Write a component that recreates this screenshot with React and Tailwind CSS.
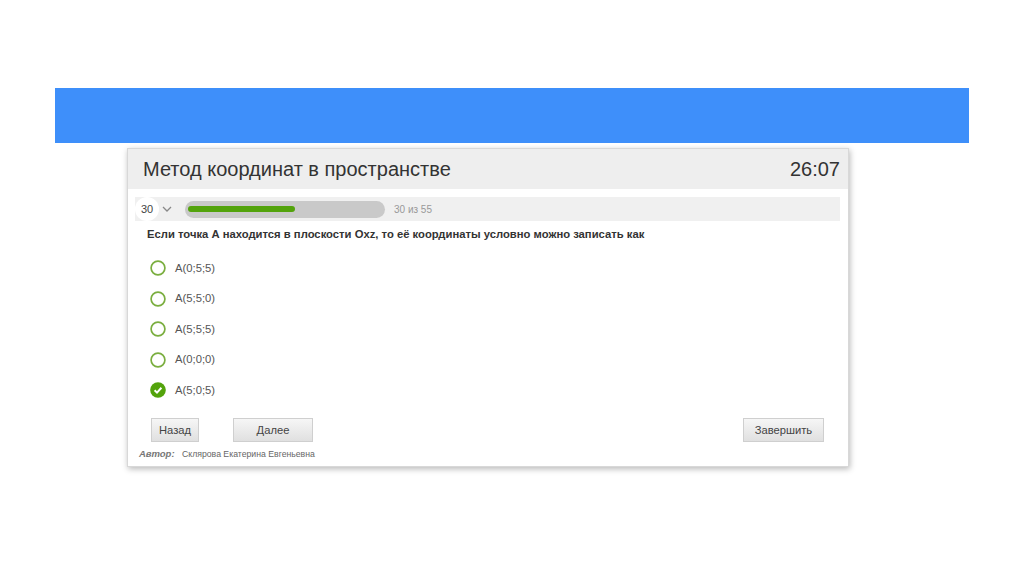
import React from "react";

const options = ["A(0;5;5)", "A(5;5;0)", "A(5;5;5)", "A(0;0;0)", "A(5;0;5)"];

function Btn({ w, children }) {
  return (
    <div className={`${w} h-[24px] flex items-center justify-center border border-[#cfcfcf] bg-gradient-to-b from-[#f6f6f6] to-[#e0e0e0] text-[11.2px] text-[#444]`}>
      {children}
    </div>
  );
}

function Radio({ checked }) {
  return (
    <svg width="16" height="16" viewBox="0 0 16 16">
      {checked ? (
        <>
          <circle cx="8" cy="8" r="7.8" fill="#53a30c" />
          <path d="M4.6 8.2 L7 10.6 L11.4 5.8" fill="none" stroke="#fff" strokeWidth="2" />
        </>
      ) : (
        <circle cx="8" cy="8" r="6.9" fill="#fff" stroke="#7aae3f" strokeWidth="1.7" />
      )}
    </svg>
  );
}

export default function App() {
  return (
    <div className="w-[1024px] h-[574px] bg-white pt-[88px] overflow-hidden font-['Liberation_Sans',Arial,sans-serif]">
      <div className="ml-[55px] w-[914px] h-[55px] bg-[#3e8ffa]" />
      <div className="ml-[127px] mt-[5px] w-[722px] h-[319px] bg-white border border-[#d8d8d8] shadow-[1px_2px_6px_rgba(0,0,0,0.28)] flex flex-col">
        <div className="h-[40px] shrink-0 bg-[#eeeeee] flex items-center justify-between pl-[15px] pr-[8px] text-[#333]">
          <span className="text-[20px] leading-none">Метод координат в пространстве</span>
          <span className="text-[20px] leading-none">26:07</span>
        </div>
        <div className="mt-[8px] ml-[7px] mr-[8px] h-[24px] shrink-0 bg-[#f0f0f0] flex items-center">
          <div className="w-[24px] h-[24px] bg-white rounded-full flex items-center justify-center">
            <span className="text-[11px] text-[#444]">30</span>
          </div>
          <svg className="ml-[3px]" width="10" height="6" viewBox="0 0 10 6">
            <path d="M1 1 L5 5 L9 1" fill="none" stroke="#888" strokeWidth="1.3" />
          </svg>
          <div className="ml-[13px] w-[200px] h-[17px] bg-[#c9c9c9] rounded-full flex items-center pl-[3px]">
            <div className="w-[107px] h-[6px] bg-[#53a30c] rounded-full" />
          </div>
          <span className="ml-[9px] text-[10px] text-[#999]">30 из 55</span>
        </div>
        <div className="mt-[6px] ml-[19px] text-[11.25px] leading-[14px] font-bold text-[#333]">
          Если точка А находится в плоскости Oxz, то её координаты условно можно записать как
        </div>
        <div className="mt-[19px] ml-[22px] flex flex-col gap-[14.5px]">
          {options.map((o, i) => (
            <div key={o} className="flex items-center gap-[9px] h-[16px]">
              <Radio checked={i === 4} />
              <span className="text-[11.25px] text-[#555]">{o}</span>
            </div>
          ))}
        </div>
        <div className="mt-[20px] ml-[23px] mr-[24px] flex items-center">
          <Btn w="w-[48px]">Назад</Btn>
          <div className="ml-[34px]"><Btn w="w-[80px]">Далее</Btn></div>
          <div className="ml-auto"><Btn w="w-[81px]">Завершить</Btn></div>
        </div>
        <div className="mt-[5px] ml-[11px] flex items-center">
          <span className="text-[9.5px] font-bold italic text-[#777] w-[43px]">Автор:</span>
          <span className="text-[8.7px] text-[#666]">Склярова Екатерина Евгеньевна</span>
        </div>
      </div>
    </div>
  );
}
